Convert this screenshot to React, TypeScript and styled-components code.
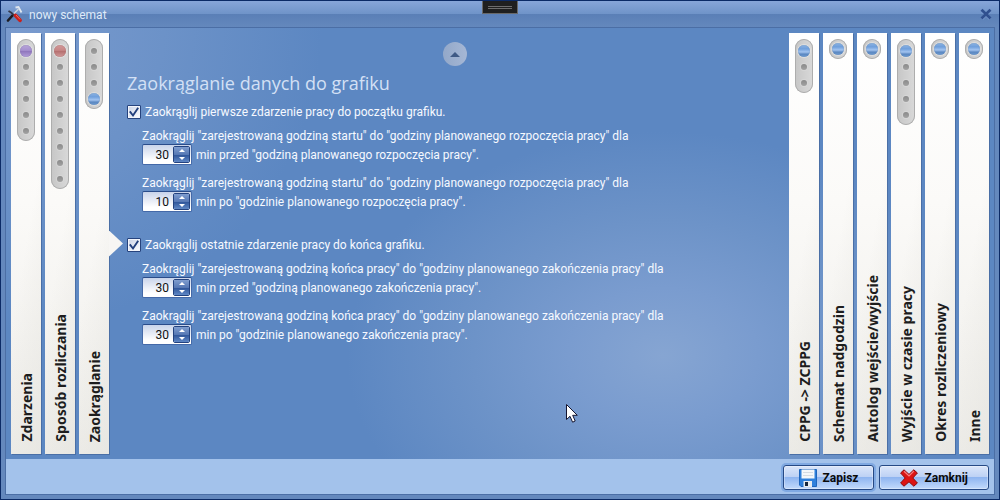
import React, { useId, useState } from "react";
import styled, { createGlobalStyle } from "styled-components";

const GlobalStyle = createGlobalStyle`
  *, *::before, *::after { box-sizing: border-box; }
  body {
    margin: 0;
    font-family: Roboto, "Noto Sans", sans-serif;
    font-size: 12px;
    line-height: 16px;
    color: #f6f9ff;
  }
`;

const Window = styled.div`
  position: relative;
  display: flex;
  flex-direction: column;
  min-height: 100vh;
  padding: 0 4px 4px;
  border: 1px solid #0b2a66;
  background: #6488bd;
  overflow: hidden;
`;

const TitleBar = styled.header`
  display: flex;
  align-items: center;
  gap: 5px;
  height: 26px;
  margin: 0 -4px;
  padding: 0 7px 0 5px;
  background: linear-gradient(#87a6d9 0, #6f93c8 50%, #5a7fb6 50%, #6488bd 100%);
`;

const WindowTitle = styled.h1`
  flex: 1;
  margin: 0;
  padding-top: 2px;
  font-size: 12px;
  font-weight: 400;
  color: #dfeaf9;
`;

const CloseButton = styled.button`
  display: flex;
  padding: 0;
  border: 0;
  background: none;
`;

const DebugHandle = styled.div`
  position: absolute;
  top: -1px;
  left: 50%;
  width: 36px;
  height: 14px;
  margin-left: -18px;
  padding: 5px;
  border: 1px solid #686868;
  background: #1f1f1f;

  &::before {
    content: "";
    display: block;
    height: 3px;
    border: solid #6c6c6c;
    border-width: 1px 0;
  }
`;

const Frame = styled.div`
  flex: 1;
  display: flex;
  flex-direction: column;
  border: 1px solid #4b6ea5;
`;

const Workspace = styled.div`
  flex: 1;
  display: flex;
  padding: 5px;
  background:
    radial-gradient(ellipse 32% 52% at 66.5% 76%, #86a5d2 0, #7a9ccf 30%, #6d93c8 60%, #5c87c200 100%),
    radial-gradient(ellipse 32% 70% at 0 0, #7a9bce 0, #6c92c8 50%, #5c87c200 100%),
    #5c87c2;
`;

const TabGroup = styled.nav`
  display: flex;
  gap: 4px;
`;

const Tab = styled.button<{ $active?: boolean }>`
  position: relative;
  display: flex;
  flex-direction: column;
  align-items: center;
  justify-content: space-between;
  width: 30px;
  padding: 6px 0 12px;
  border: 0;
  background: linear-gradient(100deg, #ffffff00 50%, #e4e3de99 100%), linear-gradient(#ffffff, #fbfaf8 40%, #eeede9);
  box-shadow: 1px 1px 0 #4a6fa6;

  &::after {
    content: "";
    display: ${(p) => (p.$active ? "block" : "none")};
    position: absolute;
    left: 100%;
    top: 50%;
    width: 14px;
    height: 26px;
    margin-top: -13px;
    background: #f7f6f4;
    clip-path: polygon(0 0, 100% 50%, 0 100%);
  }
`;

const TabLabel = styled.span`
  margin-left: 2px;
  writing-mode: vertical-rl;
  transform: rotate(180deg);
  font-family: "Noto Sans", sans-serif;
  font-size: 14px;
  line-height: 20px;
  font-weight: 700;
  color: #1d1d1d;
  white-space: nowrap;
`;

const Pill = styled.span<{ $single: boolean }>`
  display: flex;
  flex-direction: column;
  align-items: center;
  width: 18px;
  padding: ${(p) => (p.$single ? "2px 0" : "4px 0 2px")};
  border-radius: 9px;
  background: linear-gradient(90deg, #c6c6c6, #d9d9d9);
  box-shadow: inset 0 0 0 1px #adadad;
`;

const Slot = styled.span`
  display: flex;
  align-items: center;
  justify-content: center;
  height: 16px;
`;

const Dot = styled.span`
  width: 6px;
  height: 6px;
  border-radius: 50%;
  background: linear-gradient(#8a8a8a, #a2a2a2);
  box-shadow: 0 0 0 1px #e2e2e266;
`;

type BallTone = "blue" | "violet" | "red";

const ballFill: Record<BallTone, string> = {
  blue: "linear-gradient(#8eb4e2, #6f9fdc 32%, #a3c4f0 58%, #5b88c2 76%, #6f9bd0)",
  violet: "linear-gradient(#b8a6d8, #a690cf 45%, #8f76bd 52%, #b4a0da)",
  red: "linear-gradient(#d29a9a, #c78686 45%, #b57070 52%, #d29c9c)",
};

const ballEdge: Record<BallTone, string> = {
  blue: "#5c86b8",
  violet: "#7d68a8",
  red: "#a56464",
};

const Ball = styled.span<{ $tone: BallTone }>`
  width: 12px;
  height: 12px;
  border-radius: 50%;
  background: ${(p) => ballFill[p.$tone]};
  box-shadow: inset 0 0 1px ${(p) => ballEdge[p.$tone]}, 0 0 1px 1px #e4e4e4cc;
`;

const Content = styled.main`
  flex: 1;
  display: flex;
  flex-direction: column;
  align-items: flex-start;
  min-width: 0;
  margin-left: 12px;
  padding: 9px 6px;
`;

const ScrollUp = styled.button`
  display: flex;
  align-items: center;
  justify-content: center;
  align-self: center;
  width: 24px;
  height: 24px;
  padding: 0;
  border: 0;
  border-radius: 50%;
  background: linear-gradient(90deg, #93a8c9, #a5b7d5);
`;

const Heading = styled.h2`
  margin: 3px 0 6px;
  font-family: "Open Sans", "Noto Sans", sans-serif;
  font-size: 18px;
  line-height: 28px;
  font-weight: 400;
  color: #d3e0f5;
`;

const Sections = styled.div`
  display: flex;
  flex-direction: column;
  gap: 24px;
`;

const Section = styled.section`
  display: flex;
  flex-direction: column;
`;

const CheckRow = styled.label`
  display: flex;
  align-items: center;
  gap: 4px;
  height: 18px;
  margin-bottom: 7px;
`;

const CheckBox = styled.input`
  appearance: none;
  width: 14px;
  height: 14px;
  margin: 0;
  border: 1px solid #26437d;
  border-radius: 1px;
  background: linear-gradient(135deg, #c9d2e6, #ffffff);
  box-shadow: inset 0 0 0 1px #f2f5fb;

  &:checked {
    background:
      url("data:image/svg+xml,%3Csvg xmlns='http://www.w3.org/2000/svg' viewBox='0 0 12 12'%3E%3Cpath d='M1.8 5.4L5 9.5L10.2 1.8' fill='none' stroke='%23223f7c' stroke-width='1.9'/%3E%3C/svg%3E"),
      linear-gradient(135deg, #c9d2e6, #ffffff);
  }
`;

const Rules = styled.div`
  display: flex;
  flex-direction: column;
  gap: 10px;
  padding-left: 15px;
`;

const Rule = styled.div`
  display: flex;
  flex-direction: column;
`;

const RuleLine = styled.div`
  display: flex;
  align-items: center;
  gap: 4px;
`;

const Spinner = styled.div`
  display: flex;
  width: 50px;
  height: 21px;
  padding: 1px;
  border: 1px solid #4469a8;
  border-top-color: #2a4c8a;
  border-radius: 2px;
  background: linear-gradient(#c9d4ea, #ffffff 80%);
`;

const SpinnerInput = styled.input`
  flex: 1;
  min-width: 0;
  padding: 0 4px 0 0;
  border: 0;
  outline: 0;
  background: none;
  font: inherit;
  color: #111111;
  text-align: right;
`;

const Steps = styled.div`
  display: flex;
  flex-direction: column;
  width: 17px;
  border: 1px solid #23427f;
  border-radius: 2px;
  overflow: hidden;
`;

const Step = styled.button<{ $down?: boolean }>`
  flex: 1;
  display: flex;
  align-items: center;
  justify-content: center;
  padding: 0;
  border: 0;
  background: ${(p) => (p.$down ? "linear-gradient(#2f5599, #5f88c6)" : "linear-gradient(#7f9dcf, #5476b3)")};
`;

const Footer = styled.footer`
  display: flex;
  justify-content: flex-end;
  gap: 5px;
  padding: 6px 5px 4px;
  background: #a3c2eb;
`;

const ActionButton = styled.button<{ $default?: boolean }>`
  display: flex;
  align-items: center;
  gap: 6px;
  height: 25px;
  padding: 0 ${(p) => (p.$default ? 15 : 20)}px;
  border: 1px solid #264985;
  border-radius: 3px;
  background: linear-gradient(#dbe6fa 0, #bdd1f4 48%, #8fb5f0 50%, #c3dafb 100%);
  box-shadow: inset 0 0 0 1px #ffffff55${(p) => (p.$default ? ", 0 0 0 2px #80a9e2" : "")};
  font-family: inherit;
  font-size: 12px;
  line-height: 16px;
  font-weight: 700;
  color: #0a0a0a;
  white-space: nowrap;
`;

const Pointer = styled.svg`
  position: absolute;
  left: 564px;
  top: 402px;
  pointer-events: none;
`;

const ToolsIcon = () => (
  <svg width="18" height="18" viewBox="0 0 18 18" aria-hidden="true">
    <path d="M9.5 2.5L12.5 2L15.5 7.5" fill="none" stroke="#dfe6ee" strokeWidth="1.8" />
    <path d="M12.5 4L6 10.5" stroke="#c9d2dc" strokeWidth="1.6" />
    <path d="M6.5 10.5L2 15.5" stroke="#1c1c22" strokeWidth="2.6" strokeLinecap="round" />
    <path d="M2.5 6L5 7.5L9 11" fill="none" stroke="#33384a" strokeWidth="1.8" />
    <path d="M9.5 10.5L14 15.3" stroke="#c9201c" strokeWidth="3.8" strokeLinecap="round" />
    <path d="M10 10L14 14.4" stroke="#f2705e" strokeWidth="1" />
  </svg>
);

const CloseIcon = () => (
  <svg width="12" height="12" viewBox="0 0 12 12" aria-hidden="true">
    <path d="M2 2.8L10 10.8M10 2.8L2 10.8" stroke="#8fade0" strokeWidth="2.6" />
    <path d="M1.5 1.8L10.5 10.5M10.5 1.8L1.5 10.5" stroke="#30508f" strokeWidth="2.8" />
  </svg>
);

const Arrow = ({ down, color, width, height }: { down?: boolean; color: string; width: number; height: number }) => (
  <svg width={width} height={height} viewBox="0 0 10 5" preserveAspectRatio="none" aria-hidden="true">
    <path d={down ? "M0 0H10L5 5Z" : "M0 5H10L5 0Z"} fill={color} />
  </svg>
);

const SaveIcon = () => (
  <svg width="18" height="18" viewBox="0 0 18 18" aria-hidden="true">
    <path d="M0.5 0.5H17.5V17.5H2L0.5 16Z" fill="#2f80dc" stroke="#1f66bd" />
    <rect x="2.5" y="0.5" width="13" height="9" fill="#f4f7fa" />
    <path d="M4 3.5H14M4 6.5H14" stroke="#d4dbe3" />
    <rect x="4.5" y="12" width="8.5" height="6" fill="#e6ebf0" />
    <rect x="6" y="13" width="3" height="4" fill="#17273c" />
  </svg>
);

const CancelIcon = () => (
  <svg width="18" height="18" viewBox="0 0 18 18" aria-hidden="true">
    <path
      d="M4 0.8L9 5.4L13.8 0.8L17.4 4L12.8 9L17.4 14L13.8 17.2L9 12.8L4 17.2L0.6 14L5.2 9L0.6 4Z"
      fill="#dc1414"
      stroke="#8e0a0a"
      strokeLinejoin="round"
    />
    <path d="M4 2.2L9 7L13.8 2.2" fill="none" stroke="#f98080" strokeWidth="1.2" />
  </svg>
);

interface TabInfo {
  label: string;
  steps: number;
  current: number;
  tone: BallTone;
}

const leftTabs: TabInfo[] = [
  { label: "Zdarzenia", steps: 6, current: 0, tone: "violet" },
  { label: "Sposób rozliczania", steps: 9, current: 0, tone: "red" },
  { label: "Zaokrąglanie", steps: 4, current: 3, tone: "blue" },
];

const rightTabs: TabInfo[] = [
  { label: "CPPG -> ZCPPG", steps: 3, current: 0, tone: "blue" },
  { label: "Schemat nadgodzin", steps: 1, current: 0, tone: "blue" },
  { label: "Autolog wejście/wyjście", steps: 1, current: 0, tone: "blue" },
  { label: "Wyjście w czasie pracy", steps: 5, current: 0, tone: "blue" },
  { label: "Okres rozliczeniowy", steps: 1, current: 0, tone: "blue" },
  { label: "Inne", steps: 1, current: 0, tone: "blue" },
];

const TabStrip = ({ tabs, active }: { tabs: TabInfo[]; active?: string }) => (
  <TabGroup>
    {tabs.map((tab) => (
      <Tab key={tab.label} type="button" $active={tab.label === active}>
        <Pill $single={tab.steps === 1}>
          {Array.from({ length: tab.steps }, (_, i) => (
            <Slot key={i}>{i === tab.current ? <Ball $tone={tab.tone} /> : <Dot />}</Slot>
          ))}
        </Pill>
        <TabLabel>{tab.label}</TabLabel>
      </Tab>
    ))}
  </TabGroup>
);

const MinuteRule = ({ before, after, initial }: { before: string; after: string; initial: number }) => {
  const id = useId();
  const [value, setValue] = useState(initial);
  return (
    <Rule>
      <label htmlFor={id}>{before}</label>
      <RuleLine>
        <Spinner>
          <SpinnerInput
            id={id}
            inputMode="numeric"
            value={value}
            onChange={(e) => setValue(Number(e.target.value) || 0)}
          />
          <Steps>
            <Step type="button" aria-label="Zwiększ" onClick={() => setValue(value + 1)}>
              <Arrow color="#ffffff" width={6} height={3} />
            </Step>
            <Step type="button" aria-label="Zmniejsz" $down onClick={() => setValue(Math.max(0, value - 1))}>
              <Arrow down color="#ffffff" width={6} height={3} />
            </Step>
          </Steps>
        </Spinner>
        <span>{after}</span>
      </RuleLine>
    </Rule>
  );
};

const sections = [
  {
    title: "Zaokrąglij pierwsze zdarzenie pracy do początku grafiku.",
    rules: [
      {
        before: 'Zaokrąglij "zarejestrowaną godziną startu" do "godziny planowanego rozpoczęcia pracy" dla',
        after: 'min przed "godziną planowanego rozpoczęcia pracy".',
        minutes: 30,
      },
      {
        before: 'Zaokrąglij "zarejestrowaną godziną startu" do "godziny planowanego rozpoczęcia pracy" dla',
        after: 'min po "godzinie planowanego rozpoczęcia pracy".',
        minutes: 10,
      },
    ],
  },
  {
    title: "Zaokrąglij ostatnie zdarzenie pracy do końca grafiku.",
    rules: [
      {
        before: 'Zaokrąglij "zarejestrowaną godziną końca pracy" do "godziny planowanego zakończenia pracy" dla',
        after: 'min przed "godziną planowanego zakończenia pracy".',
        minutes: 30,
      },
      {
        before: 'Zaokrąglij "zarejestrowaną godziną końca pracy" do "godziny planowanego zakończenia pracy" dla',
        after: 'min po "godzinie planowanego zakończenia pracy".',
        minutes: 30,
      },
    ],
  },
];

export default function App() {
  return (
    <>
      <GlobalStyle />
      <Window>
        <TitleBar>
          <ToolsIcon />
          <WindowTitle>nowy schemat</WindowTitle>
          <CloseButton type="button" aria-label="Zamknij okno">
            <CloseIcon />
          </CloseButton>
        </TitleBar>
        <Frame>
          <Workspace>
            <TabStrip tabs={leftTabs} active="Zaokrąglanie" />
            <Content>
              <ScrollUp type="button" aria-label="W górę">
                <Arrow color="#3f5a85" width={10} height={5} />
              </ScrollUp>
              <Heading>Zaokrąglanie danych do grafiku</Heading>
              <Sections>
                {sections.map((section) => (
                  <Section key={section.title}>
                    <CheckRow>
                      <CheckBox type="checkbox" defaultChecked />
                      {section.title}
                    </CheckRow>
                    <Rules>
                      {section.rules.map((rule) => (
                        <MinuteRule key={rule.after} before={rule.before} after={rule.after} initial={rule.minutes} />
                      ))}
                    </Rules>
                  </Section>
                ))}
              </Sections>
            </Content>
            <TabStrip tabs={rightTabs} />
          </Workspace>
          <Footer>
            <ActionButton type="button" $default>
              <SaveIcon />
              Zapisz
            </ActionButton>
            <ActionButton type="button">
              <CancelIcon />
              Zamknij
            </ActionButton>
          </Footer>
        </Frame>
        <DebugHandle />
        <Pointer width="14" height="22" viewBox="0 0 14 22" aria-hidden="true">
          <path
            d="M1.5 1.5V16.5L5 13.3L7.6 19.2L10.2 18L7.7 12.3H12.3Z"
            fill="#ffffff"
            stroke="#14142e"
            strokeLinejoin="round"
          />
        </Pointer>
      </Window>
    </>
  );
}
